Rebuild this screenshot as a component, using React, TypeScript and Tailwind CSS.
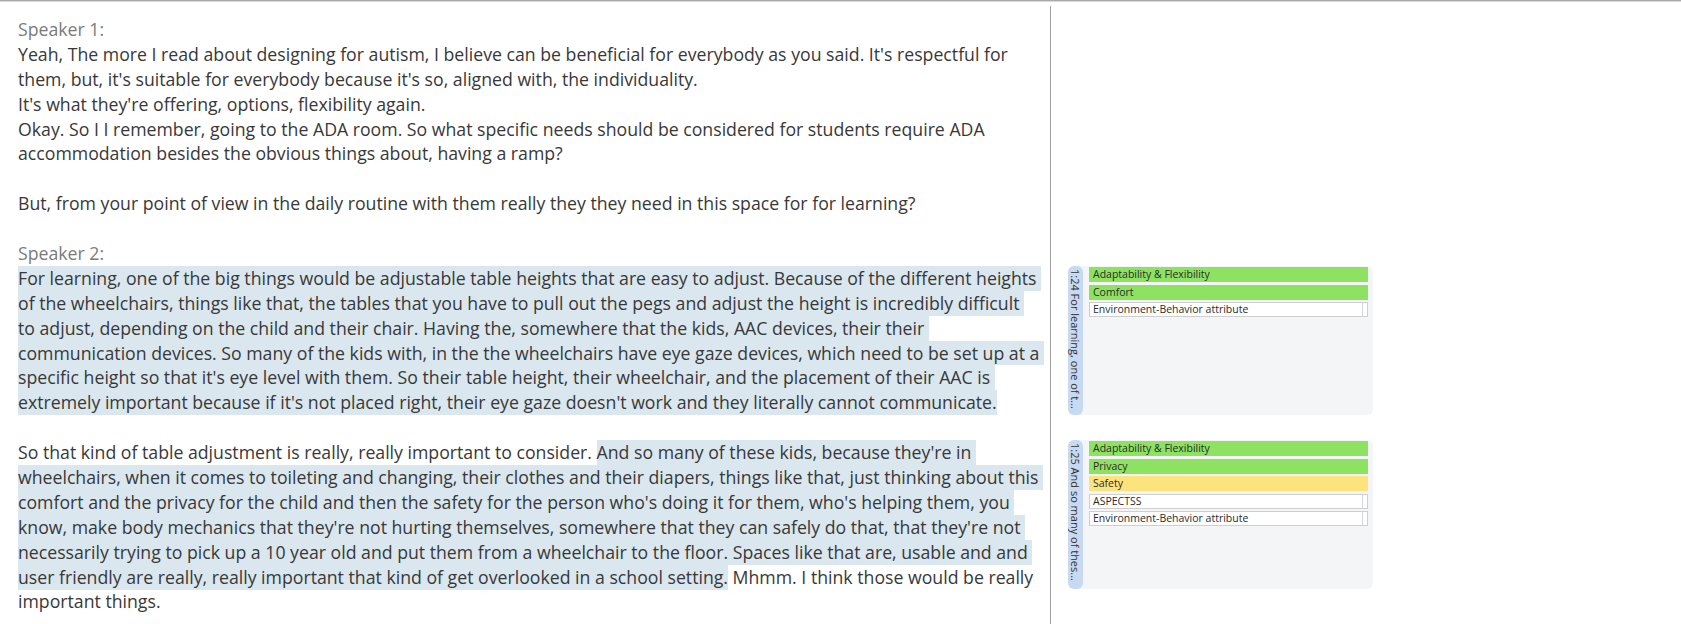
import React from "react";

type Seg = [string, boolean];
type Line = { segs: Seg[]; label?: boolean };

const L = (t: string, hl = false): Line => ({ segs: [[t, hl]] });

const lines: Line[] = [
  { segs: [["Speaker 1:", false]], label: true },
  L("Yeah, The more I read about designing for autism, I believe can be beneficial for everybody as you said. It's respectful for"),
  L("them, but, it's suitable for everybody because it's so, aligned with, the individuality."),
  L("It's what they're offering, options, flexibility again."),
  L("Okay. So I I remember, going to the ADA room. So what specific needs should be considered for students require ADA"),
  L("accommodation besides the obvious things about, having a ramp?"),
  L(""),
  L("But, from your point of view in the daily routine with them really they they need in this space for for learning?"),
  L(""),
  { segs: [["Speaker 2:", false]], label: true },
  L("For learning, one of the big things would be adjustable table heights that are easy to adjust. Because of the different heights ", true),
  L("of the wheelchairs, things like that, the tables that you have to pull out the pegs and adjust the height is incredibly difficult ", true),
  L("to adjust, depending on the child and their chair. Having the, somewhere that the kids, AAC devices, their their ", true),
  L("communication devices. So many of the kids with, in the the wheelchairs have eye gaze devices, which need to be set up at a ", true),
  L("specific height so that it's eye level with them. So their table height, their wheelchair, and the placement of their AAC is ", true),
  L("extremely important because if it's not placed right, their eye gaze doesn't work and they literally cannot communicate.", true),
  L(""),
  {
    segs: [
      ["So that kind of table adjustment is really, really important to consider. ", false],
      ["And so many of these kids, because they're in ", true],
    ],
  },
  L("wheelchairs, when it comes to toileting and changing, their clothes and their diapers, things like that, just thinking about this ", true),
  L("comfort and the privacy for the child and then the safety for the person who's doing it for them, who's helping them, you ", true),
  L("know, make body mechanics that they're not hurting themselves, somewhere that they can safely do that, that they're not ", true),
  L("necessarily trying to pick up a 10 year old and put them from a wheelchair to the floor. Spaces like that are, usable and and ", true),
  {
    segs: [
      ["user friendly are really, really important that kind of get overlooked in a school setting.", true],
      [" Mhmm. I think those would be really", false],
    ],
  },
  L("important things."),
];

type Tag = { text: string; kind: "green" | "yellow" | "white" };

function TagRow({ tag }: { tag: Tag }) {
  if (tag.kind === "white") {
    return (
      <div className="flex h-[15px] border border-[#cfcfcf] bg-white">
        <div className="flex-1 pl-[3px] text-[10.5px] leading-[13px] text-[#2b2b2b] whitespace-nowrap">
          {tag.text}
        </div>
        <div className="w-[5px] border-l border-[#d6d6d6]" />
      </div>
    );
  }
  const bg = tag.kind === "green" ? "bg-[#8de262]" : "bg-[#fde37d]";
  return (
    <div className={`h-[15px] ${bg} pl-[4px] text-[10.5px] leading-[15px] text-[#2b2b2b] whitespace-nowrap`}>
      {tag.text}
    </div>
  );
}

function Card({ label, tags, className }: { label: string; tags: Tag[]; className?: string }) {
  return (
    <div className={`flex h-[149px] w-[305px] rounded-[6px] bg-[#f4f5f7] ${className ?? ""}`}>
      <div className="flex w-[15px] justify-center rounded-[6px] bg-[#c8daf1] pt-[3px]">
        <span className="[writing-mode:vertical-rl] text-[11px] leading-[15px] text-[#333] whitespace-nowrap">
          {label}
        </span>
      </div>
      <div className="flex flex-1 flex-col gap-[2.5px] pl-[6px] pr-[5px] pt-[1px]">
        {tags.map((t, i) => (
          <TagRow key={i} tag={t} />
        ))}
      </div>
    </div>
  );
}

export default function App() {
  return (
    <div
      className="flex h-[624px] w-[1681px] flex-col overflow-hidden bg-white"
      style={{ fontFamily: '"Open Sans", "Noto Sans", sans-serif' }}
    >
      <div className="h-[1px] w-full bg-[#a8a8a8]" />
      <div className="h-[1px] w-full bg-[#dadada]" />
      <div className="flex flex-1">
        <div className="w-[1050px] pl-[18px] pt-[15px] text-[17.7px] text-[#383838]">
          {lines.map((ln, i) => (
            <div key={i} className="h-[24.9px] leading-[24.9px] whitespace-pre">
              {ln.segs.map(([t, hl], j) =>
                hl ? (
                  <span key={j} className="inline-block bg-[#dae7ef]">
                    {t}
                  </span>
                ) : (
                  <span key={j} className={ln.label ? "text-[#7b7b7b]" : ""}>
                    {t}
                  </span>
                )
              )}
            </div>
          ))}
        </div>
        <div className="mt-[4px] w-[1px] bg-[#9f9f9f]" />
        <div className="flex flex-col pl-[17px] pt-[264px]">
          <Card
            label="1:24 For learning, one of t..."
            tags={[
              { text: "Adaptability & Flexibility", kind: "green" },
              { text: "Comfort", kind: "green" },
              { text: "Environment-Behavior attribute", kind: "white" },
            ]}
          />
          <Card
            className="mt-[25px]"
            label="1:25 And so many of thes..."
            tags={[
              { text: "Adaptability & Flexibility", kind: "green" },
              { text: "Privacy", kind: "green" },
              { text: "Safety", kind: "yellow" },
              { text: "ASPECTSS", kind: "white" },
              { text: "Environment-Behavior attribute", kind: "white" },
            ]}
          />
        </div>
      </div>
    </div>
  );
}
